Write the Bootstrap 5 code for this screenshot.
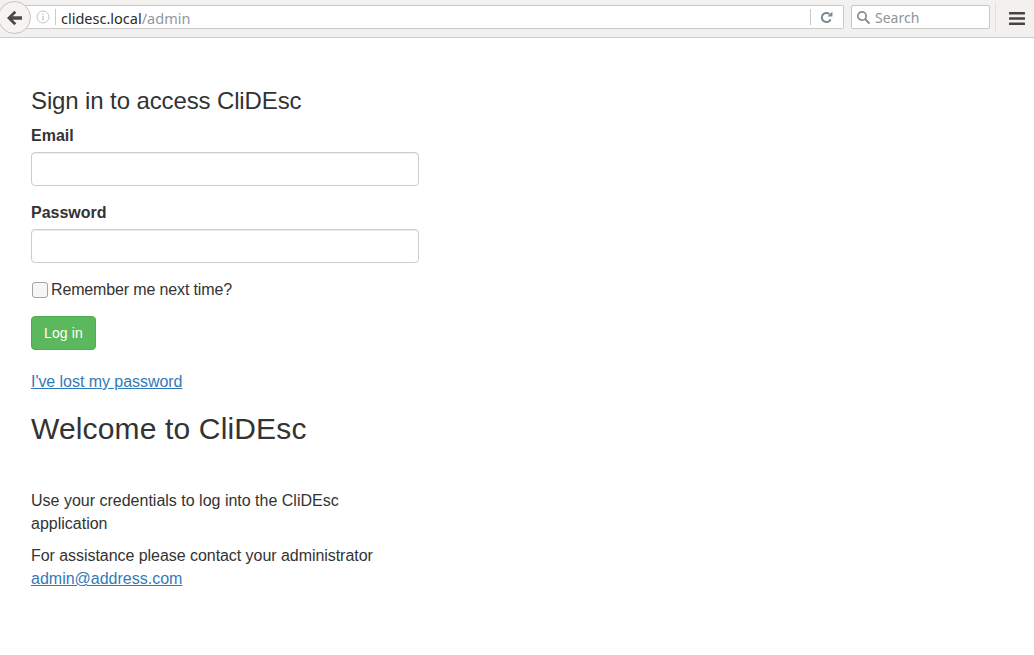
<!DOCTYPE html>
<html lang="en">
<head>
    <meta charset="UTF-8">
    <meta name="viewport" content="width=device-width, initial-scale=1.0">
    <title>Log in</title>
    <link rel="stylesheet" href="https://cdn.jsdelivr.net/npm/bootstrap@5.3.0/dist/css/bootstrap.min.css">
    <style>
        body { font-family: "Liberation Sans", Arial, sans-serif; font-size: 16px; line-height: 23px; color: #333; background: #fff; overflow: hidden; }
        a { color: #337ab7; }

        /* browser toolbar */
        .chrome-bar { height: 38px; background: #f2f1ef; border-bottom: 1px solid #cdcdcb; font-family: "Noto Sans", sans-serif; position: relative; }
        .back-btn { position: absolute; left: -2px; top: 1px; width: 33px; height: 33px; border-radius: 50%; background: #f5f4f3; border: 1px solid #c4c3c1; z-index: 1; }
        .url-box { margin-left: 26px; width: 818px; height: 24px; margin-top: 5px; background: #fff; border: 1px solid #c8c8c6; border-left: 0; border-radius: 0 2px 2px 0; font-size: 14.5px; line-height: 22px; }
        .url-info { margin-left: 10px; margin-right: 5px; }
        .url-host { color: #2b2b2b; padding-top: 1px; margin-left: 5px; }
        .url-path { color: #93989e; }
        .url-sep { width: 1px; height: 16px; background: #c9c9c9; }
        .reload-icon { margin: 0 10px 0 9px; }
        .search-box { margin-left: 7px; width: 139px; height: 24px; margin-top: 5px; background: #fff; border: 1px solid #c8c8c6; border-radius: 2px; font-size: 14px; line-height: 22px; color: #8f9499; }
        .search-box span { padding-top: 1px; }
        .bar-sep { width: 1px; height: 30px; background: #e2e1df; margin-left: 5px; margin-top: 2px; }
        .menu-icon { margin: 0 0 0 13px; }

        /* page */
        .page-wrap { padding: 47px 0 0 31px; }
        .form-col { width: 388px; }
        .text-col { width: 360px; }
        .title-sm { font-size: 24px; line-height: 31px; font-weight: 400; color: #333; margin: 0 0 8px; letter-spacing: -.12px; }
        .title-lg { font-size: 30px; line-height: 33px; font-weight: 400; color: #333; margin: 0 0 44px; letter-spacing: .15px; }
        .field-label { font-weight: 700; margin-bottom: 5px; display: block; }
        .field-input { height: 34px; border-color: #ccc; border-radius: 4px; box-shadow: inset 0 1px 1px rgba(0,0,0,.075); }
        .field-group { margin-bottom: 15px; }
        .remember-box { appearance: none; width: 16px; height: 16px; margin: 1px 3px 0 1px; border: 1px solid #a3a3a3; border-radius: 3px; background: #f6f6f6; }
        .remember-label { letter-spacing: -.14px; }
        .login-btn { background: #5cb85c; border: 1px solid #4cae4c; color: #fff; font-size: 14px; line-height: 20px; padding: 6px 12px; border-radius: 4px; letter-spacing: .15px; }
        .lost-link { margin: 20px 0 19px; letter-spacing: -.05px; }
        .copy-para { margin-bottom: 9px; }
        .copy-tight { letter-spacing: -.05px; }
        .copy-tight a { letter-spacing: 0; }
    </style>
</head>
<body>
    <!-- Browser toolbar -->
    <div class="chrome-bar d-flex">
        <div class="back-btn d-flex align-items-center justify-content-center">
            <svg width="17" height="16" viewBox="0 0 17 16"><path d="M8.3.8 1 8l7.3 7.2 2-2-3.6-3.5H16V6.3H6.7l3.6-3.5z" fill="#4a4a4a"/></svg>
        </div>
        <div class="url-box d-flex align-items-center">
            <svg class="url-info" width="14" height="14" viewBox="0 0 14 14"><circle cx="7" cy="7" r="6" fill="none" stroke="#c4c4c4"/><rect x="6.4" y="6" width="1.3" height="4.4" fill="#c4c4c4"/><rect x="6.4" y="3.6" width="1.3" height="1.4" fill="#c4c4c4"/></svg>
            <span class="url-sep"></span>
            <span class="url-host">clidesc.local<span class="url-path">/admin</span></span>
            <span class="url-sep ms-auto"></span>
            <svg class="reload-icon" width="13" height="13" viewBox="0 0 13 13"><path d="M10.6 8.4A4.6 4.6 0 1 1 9.4 3" fill="none" stroke="#7b8791" stroke-width="2"/><path d="M7.6 5.4H12.4V.6z" fill="#7b8791"/></svg>
        </div>
        <div class="search-box d-flex align-items-center">
            <svg class="mx-1" width="15" height="15" viewBox="0 0 15 15"><circle cx="6" cy="6" r="4.2" fill="none" stroke="#8a8a8a" stroke-width="1.7"/><path d="M9 9l4.6 4.6" stroke="#8a8a8a" stroke-width="2"/></svg>
            <span>Search</span>
        </div>
        <div class="bar-sep"></div>
        <div class="menu-icon d-flex flex-column justify-content-center">
            <svg width="16" height="13" viewBox="0 0 16 13"><path d="M1 0h14a1 1 0 0 1 0 2.6H1a1 1 0 0 1 0-2.6zM1 5.2h14a1 1 0 0 1 0 2.6H1a1 1 0 0 1 0-2.6zM1 10.4h14a1 1 0 0 1 0 2.6H1a1 1 0 0 1 0-2.6z" fill="#444"/></svg>
        </div>
    </div>

    <div class="page-wrap">
        <form class="form-col">
            <h3 class="title-sm">Sign in to access CliDEsc</h3>
            <div class="field-group">
                <label class="field-label" for="email">Email</label>
                <input type="email" class="form-control field-input" id="email">
            </div>
            <div class="field-group">
                <label class="field-label" for="password">Password</label>
                <input type="password" class="form-control field-input" id="password">
            </div>
            <div class="d-flex align-items-center field-group">
                <input type="checkbox" class="remember-box" id="remember">
                <label class="remember-label" for="remember">Remember me next time?</label>
            </div>
            <button type="button" class="btn login-btn">Log in</button>
            <p class="lost-link"><a href="#">I've lost my password</a></p>
        </form>
        <h2 class="title-lg">Welcome to CliDEsc</h2>
        <div class="text-col">
            <p class="copy-para">Use your credentials to log into the CliDEsc application</p>
            <p class="copy-para copy-tight">For assistance please contact your administrator <a href="#">admin@address.com</a></p>
        </div>
    </div>

    <script src="https://cdn.jsdelivr.net/npm/bootstrap@5.3.0/dist/js/bootstrap.bundle.min.js"></script>
</body>
</html>
